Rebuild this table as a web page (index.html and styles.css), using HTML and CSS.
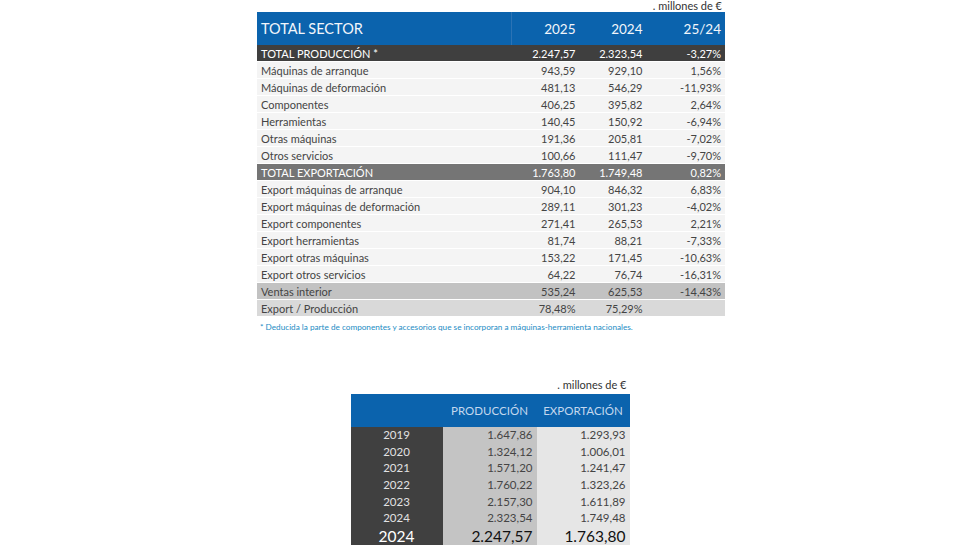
FILE: index.html
```html
<!DOCTYPE html>
<html lang="es">
<head>
    <meta charset="UTF-8">
    <title>Total sector</title>
    <link rel="stylesheet" href="styles.css">
</head>
<body>
    <div class="page">
        <div class="sector">
            <div class="unit">. millones de €</div>
            <table class="sector-table">
                <thead>
                    <tr class="head">
                        <th class="label">TOTAL SECTOR</th>
                        <th>2025</th>
                        <th>2024</th>
                        <th>25/24</th>
                    </tr>
                </thead>
                <tbody>
                    <tr class="total-dark"><td class="label">TOTAL PRODUCCIÓN *</td><td>2.247,57</td><td>2.323,54</td><td>-3,27%</td></tr>
                    <tr><td class="label">Máquinas de arranque</td><td>943,59</td><td>929,10</td><td>1,56%</td></tr>
                    <tr><td class="label">Máquinas de deformación</td><td>481,13</td><td>546,29</td><td>-11,93%</td></tr>
                    <tr><td class="label">Componentes</td><td>406,25</td><td>395,82</td><td>2,64%</td></tr>
                    <tr><td class="label">Herramientas</td><td>140,45</td><td>150,92</td><td>-6,94%</td></tr>
                    <tr><td class="label">Otras máquinas</td><td>191,36</td><td>205,81</td><td>-7,02%</td></tr>
                    <tr><td class="label">Otros servicios</td><td>100,66</td><td>111,47</td><td>-9,70%</td></tr>
                    <tr class="total-mid"><td class="label">TOTAL EXPORTACIÓN</td><td>1.763,80</td><td>1.749,48</td><td>0,82%</td></tr>
                    <tr><td class="label">Export máquinas de arranque</td><td>904,10</td><td>846,32</td><td>6,83%</td></tr>
                    <tr><td class="label">Export máquinas de deformación</td><td>289,11</td><td>301,23</td><td>-4,02%</td></tr>
                    <tr><td class="label">Export componentes</td><td>271,41</td><td>265,53</td><td>2,21%</td></tr>
                    <tr><td class="label">Export herramientas</td><td>81,74</td><td>88,21</td><td>-7,33%</td></tr>
                    <tr><td class="label">Export otras máquinas</td><td>153,22</td><td>171,45</td><td>-10,63%</td></tr>
                    <tr><td class="label">Export otros servicios</td><td>64,22</td><td>76,74</td><td>-16,31%</td></tr>
                    <tr class="grey"><td class="label">Ventas interior</td><td>535,24</td><td>625,53</td><td>-14,43%</td></tr>
                    <tr class="light-grey"><td class="label">Export / Producción</td><td>78,48%</td><td>75,29%</td><td></td></tr>
                </tbody>
            </table>
            <p class="note">* Deducida la parte de componentes y accesorios que se incorporan a máquinas-herramienta nacionales.</p>
        </div>

        <div class="history">
            <div class="unit">. millones de €</div>
            <table class="history-table">
                <thead>
                    <tr class="head">
                        <th></th>
                        <th>PRODUCCIÓN</th>
                        <th>EXPORTACIÓN</th>
                    </tr>
                </thead>
                <tbody>
                    <tr><td class="year">2019</td><td class="prod">1.647,86</td><td class="exp">1.293,93</td></tr>
                    <tr><td class="year">2020</td><td class="prod">1.324,12</td><td class="exp">1.006,01</td></tr>
                    <tr><td class="year">2021</td><td class="prod">1.571,20</td><td class="exp">1.241,47</td></tr>
                    <tr><td class="year">2022</td><td class="prod">1.760,22</td><td class="exp">1.323,26</td></tr>
                    <tr><td class="year">2023</td><td class="prod">2.157,30</td><td class="exp">1.611,89</td></tr>
                    <tr><td class="year">2024</td><td class="prod">2.323,54</td><td class="exp">1.749,48</td></tr>
                    <tr class="current"><td class="year">2024</td><td class="prod">2.247,57</td><td class="exp">1.763,80</td></tr>
                </tbody>
            </table>
        </div>
    </div>
</body>
</html>
```

FILE: styles.css
```css
body {
    margin: 0;
    background: #fff;
    font-family: Lato, "Liberation Sans", sans-serif;
    color: #444;
}
.page {
    width: 980px;
    height: 560px;
    display: flex;
    flex-direction: column;
    align-items: center;
}
.unit {
    text-align: right;
    font-size: 11px;
    color: #333;
    line-height: 12px;
    padding-right: 3px;
}
table {
    border-collapse: collapse;
}

/* top table */
.sector {
    width: 468px;
    margin-left: 2px;
}
.sector-table {
    width: 468px;
    font-size: 11px;
}
.sector-table td {
    height: 15px;
    padding: 1px 4px 0 0;
    text-align: right;
    white-space: nowrap;
    line-height: 15px;
    background: #f4f4f4;
    border-bottom: 1px solid #fff;
}
.sector-table .label {
    text-align: left;
    padding-left: 4px;
    width: 246px;
}
.sector-table td:nth-child(2) { width: 64px; }
.sector-table td:nth-child(3) { width: 63px; }
.sector-table .head th {
    background: #0b63ad;
    color: #f2f6fb;
    font-weight: normal;
    font-size: 13.5px;
    height: 33px;
    padding: 0 4px 0 0;
    text-align: right;
}
.sector-table .head th.label {
    font-size: 14.5px;
    text-align: left;
    padding-left: 4px;
    border-right: 1px solid #2b73b5;
}
.sector-table .total-dark td {
    background: #3f3f3f;
    color: #fff;
}
.sector-table .total-mid td {
    background: #757575;
    color: #fff;
}
.sector-table .grey td {
    background: #c2c2c2;
}
.sector-table .light-grey td {
    background: #d9d9d9;
}
.note {
    margin: 5px 0 0 3px;
    font-size: 8.2px;
    color: #1c8cc4;
}

/* bottom table */
.history {
    margin-top: 47px;
    width: 279px;
}
.history .unit {
    padding-right: 3px;
    margin-bottom: 3px;
}
.history-table {
    width: 279px;
    font-size: 11.5px;
}
.history-table .head th {
    background: #0b63ad;
    color: #c4d8ee;
    font-weight: normal;
    height: 33px;
    padding: 0;
    font-size: 11.5px;
    text-align: center;
}
.history-table td {
    height: 16.6px;
    line-height: 16px;
    padding: 0 4px 0 0;
    text-align: right;
}
.history-table .year {
    width: 92px;
    background: #404040;
    color: #e2e2e2;
    text-align: center;
    padding: 0;
}
.history-table .prod {
    width: 90px;
    background: #c4c4c4;
}
.history-table .exp {
    background: #e6e6e6;
}
.history-table .current td {
    font-size: 15.5px;
    height: 18px;
    line-height: 18px;
    color: #111;
}
.history-table .current .year {
    color: #fff;
}
```
